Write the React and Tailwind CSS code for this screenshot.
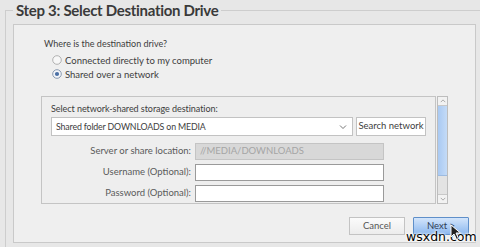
import React from "react";

function Radio({ checked }) {
  return (
    <svg width="10" height="10" viewBox="0 0 10 10" className="shrink-0">
      <circle cx="5" cy="5" r="4.3" fill={checked ? "#f4f6fa" : "#f7f7f7"} stroke={checked ? "#7d8ea8" : "#a9a9a9"} strokeWidth="0.9" />
      {checked && <circle cx="5" cy="5" r="2.1" fill="#4a6fa5" />}
    </svg>
  );
}

function Chevron({ up, size = 7, color = "#555" }) {
  return (
    <svg width={size} height={size} viewBox="0 0 8 8">
      <path d={up ? "M1 5.5 L4 2.5 L7 5.5" : "M1 2.5 L4 5.5 L7 2.5"} fill="none" stroke={color} strokeWidth="0.9" />
    </svg>
  );
}

export default function App() {
  const font = { fontFamily: "Lato, 'Open Sans', sans-serif" };
  return (
    <div className="relative w-[480px] h-[247px] overflow-hidden bg-[#e7e7e7] text-[#3d3d3d]" style={font}>
      <fieldset className="ml-[5px] w-[490px] border-t border-l border-[#cdcdcd] pb-[6px]">
        <legend className="ml-[7px] px-[3px] text-[15px] leading-[20px] font-bold text-[#3a3a3a] tracking-[-0.3px]">
          Step 3: Select Destination Drive
        </legend>
        <div className="ml-[7px] mt-[4px] w-[463px] h-[219px] border border-[#c9c9c9] bg-[#efefef] flex flex-col">
          <div className="ml-[30px] mt-[12px] text-[9px] leading-[13px]">Where is the destination drive?</div>
          <div className="ml-[38px] mt-[3px] flex flex-col">
            <div className="flex items-center gap-[3px] h-[14px] text-[9.5px] leading-[13px]">
              <Radio />
              <span>Connected directly to my computer</span>
            </div>
            <div className="flex items-center gap-[3px] h-[14px] text-[9.5px] leading-[13px]">
              <Radio checked />
              <span>Shared over a network</span>
            </div>
          </div>
          <div className="ml-[27px] mt-[15px] flex gap-[1px]">
            <div className="w-[395px] h-[108px] border border-[#c4c4c4] bg-[#eeeeee] pl-[9px] pt-[5px] flex flex-col">
              <div className="text-[9px] leading-[13px] tracking-[-0.05px]">Select network-shared storage destination:</div>
              <div className="mt-[2px] flex gap-[3px]">
                <div className="w-[302px] h-[19px] border border-[#c2c2c2] bg-white flex items-center justify-between pl-[4px] pr-[5px] text-[8.8px] tracking-[-0.15px]">
                  <span>Shared folder DOWNLOADS on MEDIA</span>
                  <Chevron size={8} color="#666" />
                </div>
                <div className="w-[70px] h-[19px] border border-[#c2c2c2] bg-white flex items-center justify-center text-[9.5px]">
                  Search network
                </div>
              </div>
              <div className="mt-[7px] flex flex-col gap-[4px]">
                <div className="flex items-center">
                  <div className="w-[144px] text-right pr-[4px] text-[9.5px] text-[#5a5a5a]">Server or share location:</div>
                  <div className="w-[189px] h-[17px] border border-[#c4c4c4] bg-[#d8d8d8] flex items-center pl-[4px] text-[9.5px] text-[#a5a5a5]">
                    //MEDIA/DOWNLOADS
                  </div>
                </div>
                <div className="flex items-center">
                  <div className="w-[144px] text-right pr-[4px] text-[9.5px] text-[#5a5a5a]">Username (Optional):</div>
                  <div className="w-[189px] h-[17px] border border-[#9a9a9a] bg-white" />
                </div>
                <div className="flex items-center">
                  <div className="w-[144px] text-right pr-[4px] text-[9.5px] text-[#5a5a5a]">Password (Optional):</div>
                  <div className="w-[189px] h-[17px] border border-[#9a9a9a] bg-white" />
                </div>
              </div>
            </div>
            <div className="w-[11px] h-[108px] border border-[#bdbdbd] bg-[#e3e3e3] flex flex-col">
              <div className="h-[9px] flex items-center justify-center border-b border-[#c8c8c8] bg-[#f2f2f2]">
                <Chevron up size={6} color="#888" />
              </div>
              <div className="h-[70px] bg-gradient-to-r from-[#a9c9f2] to-[#c4dbf7] border-b border-[#9dbbe0]" />
              <div className="flex-1" />
              <div className="h-[9px] flex items-center justify-center border-t border-[#c8c8c8] bg-[#f2f2f2]">
                <Chevron size={6} color="#888" />
              </div>
            </div>
          </div>
          <div className="mt-[13px] mr-[6px] flex justify-end gap-[8px]">
            <div className="w-[56px] h-[18px] border border-[#c3c3c3] bg-gradient-to-b from-[#fbfbfb] to-[#ececec] flex items-center justify-center text-[9.5px] text-[#555]">
              Cancel
            </div>
            <div className="w-[56px] h-[18px] border border-[#5f8fc9] bg-gradient-to-b from-[#d3e5fb] to-[#8db8ee] flex items-center justify-center text-[9.5px] text-[#2f3d55] rounded-[1px]">
              Next &gt;
            </div>
          </div>
        </div>
      </fieldset>
      <div
        className="absolute left-[406px] top-[229px] text-[12.5px] leading-[16px] text-black"
        style={{ fontFamily: "'DejaVu Sans', sans-serif", textShadow: "0 0 2px #fff, 0 0 2px #fff, 0 0 3px #fff" }}
      >
        wsxdn.com
      </div>
      <svg className="absolute left-[450px] top-[224px]" width="12" height="17" viewBox="0 0 12 17">
        <path d="M1 1 L1 13 L4 10 L6.5 15.5 L8.5 14.5 L6 9 L10.5 9 Z" fill="#222" stroke="#fff" strokeWidth="1" strokeLinejoin="round" />
      </svg>
    </div>
  );
}
